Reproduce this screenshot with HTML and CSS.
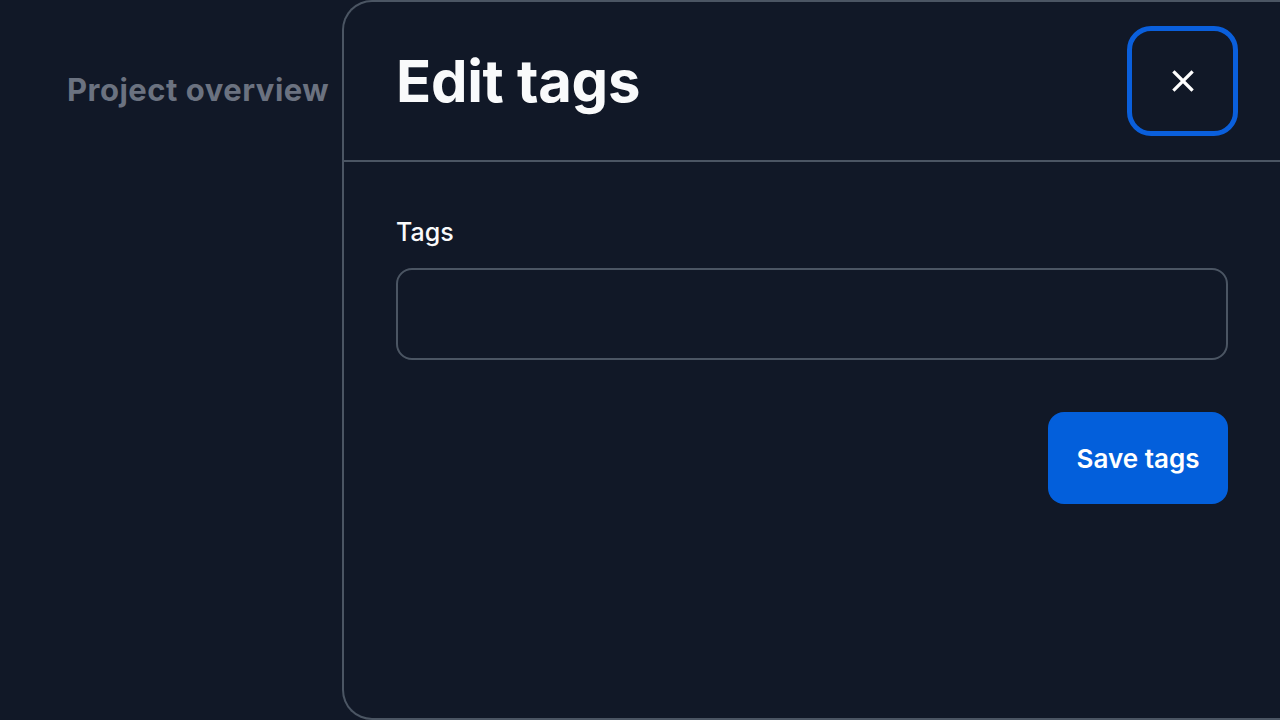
FILE: index.html
```html
<!DOCTYPE html>
<html lang="en">
<head>
    <meta charset="UTF-8">
    <meta name="viewport" content="width=device-width, initial-scale=1.0">
    <title>Edit tags</title>
    <link rel="stylesheet" href="styles.css">
</head>
<body>
    <div class="page">
        <div class="page-side">
            <h2 class="page-title">Project overview</h2>
        </div>

        <div class="drawer">
            <div class="drawer-header">
                <h1>Edit tags</h1>
                <button class="close-btn" aria-label="Close">
                    <svg width="22" height="22" viewBox="0 0 22 22">
                        <path d="M2.5 2.5 L19.5 19.5 M19.5 2.5 L2.5 19.5" stroke="#ffffff" stroke-width="3.2" stroke-linecap="square" fill="none"/>
                    </svg>
                </button>
            </div>

            <div class="drawer-body">
                <label for="tags-input">Tags</label>
                <input type="text" id="tags-input">

                <div class="actions">
                    <button class="save-btn">Save tags</button>
                </div>
            </div>
        </div>
    </div>
</body>
</html>
```

FILE: styles.css
```css
html, body {
    margin: 0;
    height: 100%;
    overflow: hidden;
}
body {
    font-family: Inter, "Noto Sans", sans-serif;
    background-color: #111827;
    color: #f3f4f6;
}
.page {
    display: flex;
    height: 720px;
}
.page-side {
    width: 342px;
    flex-shrink: 0;
    padding: 70px 0 0 67px;
    box-sizing: border-box;
}
.page-title {
    margin: 0;
    font-size: 31px;
    font-weight: 700;
    letter-spacing: 0.5px;
    line-height: 40px;
    color: #6b7280;
    white-space: nowrap;
}
.drawer {
    flex: 1;
    display: flex;
    flex-direction: column;
    background-color: #111827;
    border: 2px solid #4b5563;
    border-right: none;
    border-radius: 30px 0 0 30px;
    height: 720px;
    box-sizing: border-box;
}
.drawer-header {
    display: flex;
    align-items: center;
    justify-content: space-between;
    padding: 24px 42px 24px 52px;
    border-bottom: 2px solid #4b5563;
}
.drawer-header h1 {
    margin: 0;
    font-size: 58px;
    font-weight: 700;
    letter-spacing: -0.3px;
    color: #f9fafb;
}
.close-btn {
    flex-shrink: 0;
    width: 111px;
    height: 110px;
    display: flex;
    align-items: center;
    justify-content: center;
    background: transparent;
    border: 5px solid #0a5fdc;
    border-radius: 24px;
    cursor: pointer;
    padding: 0;
}
.drawer-body {
    padding: 54px 52px 0 52px;
    display: flex;
    flex-direction: column;
}
.drawer-body label {
    font-size: 25px;
    font-weight: 500;
    line-height: 32px;
    color: #f9fafb;
}
.drawer-body input {
    margin-top: 20px;
    height: 92px;
    box-sizing: border-box;
    background: #111827;
    border: 2px solid #4b5563;
    border-radius: 16px;
    padding: 0 20px;
    font-size: 24px;
    color: #f9fafb;
}
.actions {
    display: flex;
    justify-content: flex-end;
    margin-top: 52px;
}
.save-btn {
    width: 180px;
    height: 92px;
    background-color: #035fdb;
    color: #ffffff;
    border: none;
    border-radius: 16px;
    font-family: inherit;
    font-size: 26px;
    font-weight: 600;
    cursor: pointer;
}
```
